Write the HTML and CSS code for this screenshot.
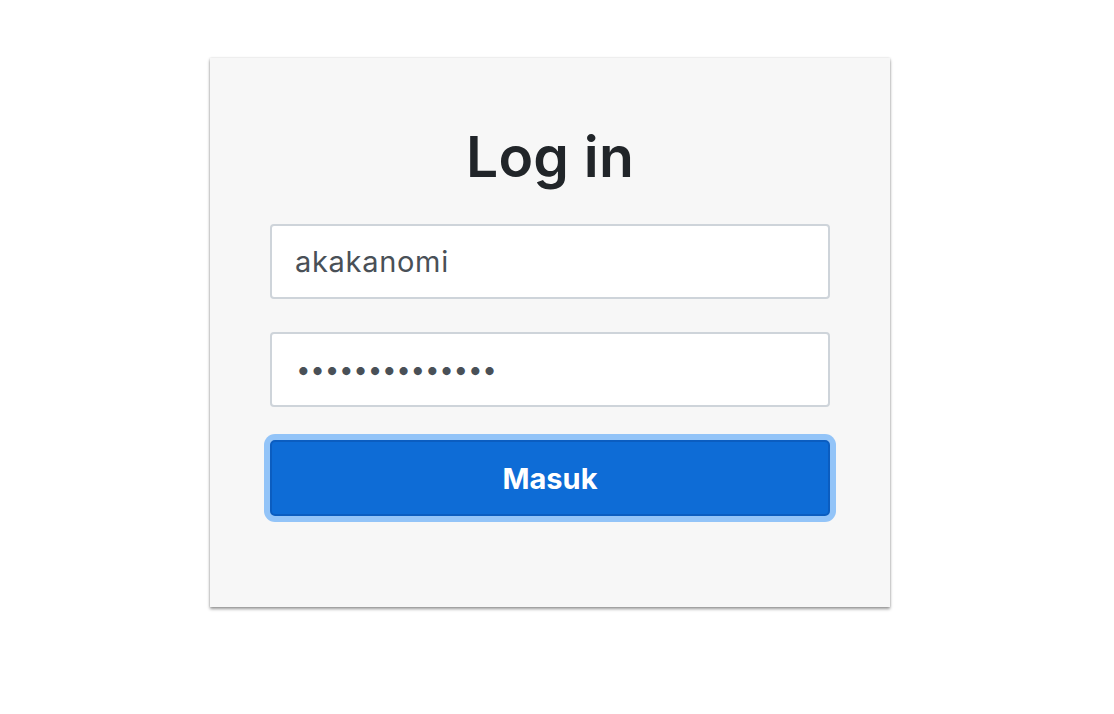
FILE: index.html
```html
<!DOCTYPE html>
<html lang="id">
<head>
<meta charset="utf-8">
<title>Log in</title>
<link rel="stylesheet" href="styles.css">
</head>
<body>
<main class="page">
  <form class="card">
    <h1 class="title">Log in</h1>
    <input class="field" type="text" value="akakanomi">
    <input class="field field-pass" type="password" value="akakanomi12345">
    <button class="btn" type="button">Masuk</button>
  </form>
</main>
</body>
</html>
```

FILE: styles.css
```css
html, body {
  margin: 0;
  padding: 0;
  background: #ffffff;
}
body {
  font-family: Inter, "Helvetica Neue", Arial, sans-serif;
  color: #212529;
}
.page {
  padding: 58px 0 60px 210px;
}
.card {
  box-sizing: border-box;
  width: 680px;
  height: 549px;
  background: #f7f7f7;
  box-shadow: 0 2px 3px rgba(0, 0, 0, 0.4), 0 0 2px rgba(0, 0, 0, 0.15);
  padding: 65px 60px 0 60px;
  display: flex;
  flex-direction: column;
}
.title {
  margin: 0 0 34px 0;
  font-size: 57px;
  line-height: 67px;
  font-weight: 600;
  text-align: center;
  color: #212529;
  letter-spacing: 0.2px;
}
.field {
  box-sizing: border-box;
  height: 75px;
  width: 560px;
  margin: 0 0 33px 0;
  padding: 0 23px;
  border: 2px solid #ced4da;
  border-radius: 4px;
  background: #fff;
  font-family: Inter, "Helvetica Neue", Arial, sans-serif;
  font-size: 29px;
  letter-spacing: 0.7px;
  color: #495057;
  outline: none;
}
.field-pass {
  font-size: 26px;
  letter-spacing: -0.3px;
  padding-left: 24px;
}
.btn {
  box-sizing: border-box;
  height: 76px;
  width: 560px;
  border: 2px solid #0b5dc0;
  border-radius: 5px;
  background: #0e6cd6;
  color: #fff;
  font-family: Inter, "Helvetica Neue", Arial, sans-serif;
  font-size: 29px;
  font-weight: 700;
  padding-top: 2px;
  box-shadow: 0 0 0 6px #93c4f8;
  cursor: pointer;
}
```
